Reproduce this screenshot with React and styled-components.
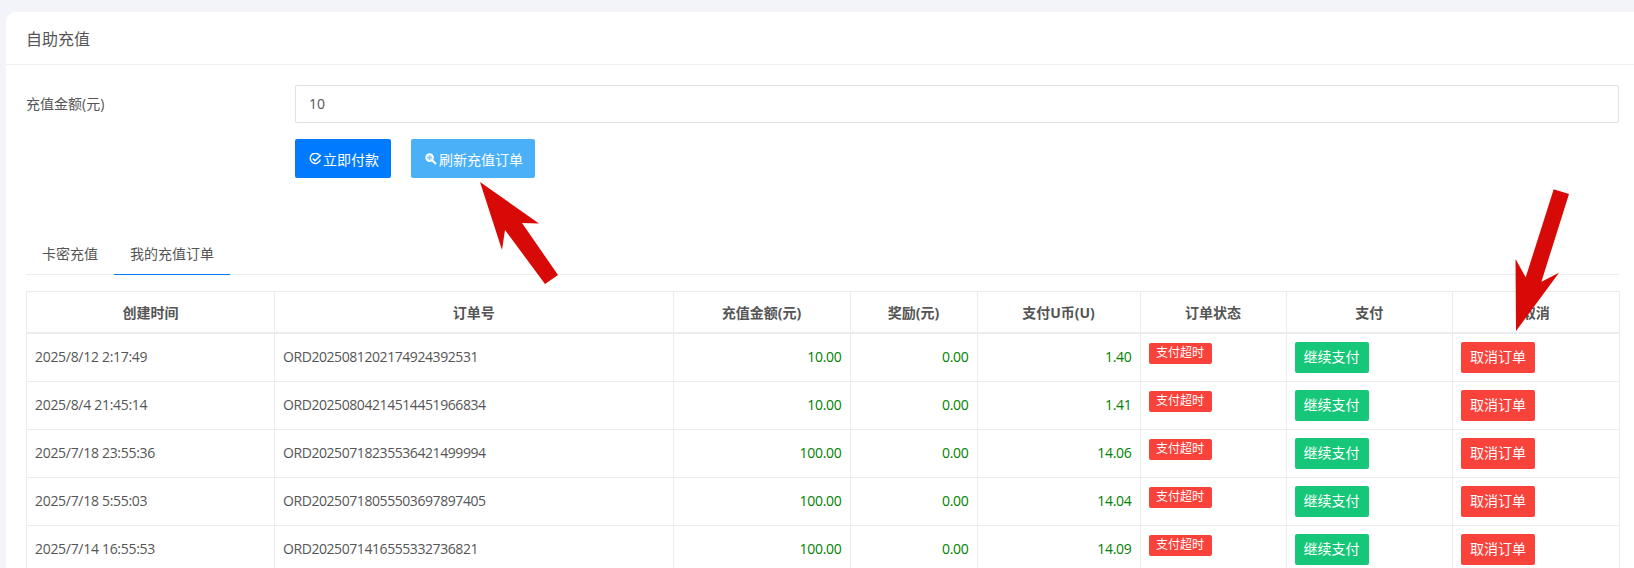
import React from "react";
import styled, { createGlobalStyle } from "styled-components";

const Global = createGlobalStyle`
  html, body { margin: 0; padding: 0; height: 568px; overflow: hidden; background: #f3f4f9; }
  body { font-family: "Open Sans", "Noto Sans CJK SC", sans-serif; font-size: 14px; color: #555; }
`;
const Page = styled.div`
  position: relative;
  width: 1634px;
  height: 568px;
  overflow: hidden;
  padding: 12px 0 0 6px;
  box-sizing: border-box;
`;
const Card = styled.section`
  background: #fff;
  border-radius: 10px 0 0 0;
  height: 600px;
`;
const CardHeader = styled.header`
  height: 53px;
  box-sizing: border-box;
  padding: 0 20px 1px;
  display: flex;
  align-items: center;
  font-size: 16px;
  border-bottom: 1px solid #eef0f3;
`;
const CardBody = styled.div`
  padding: 20px 15px 0 20px;
`;
const FormRow = styled.div`
  display: grid;
  grid-template-columns: 269px 1fr;
  align-items: center;
`;
const Label = styled.label`
  font-size: 14px;
  margin-top: -2px;
`;
const Input = styled.input`
  height: 38px;
  box-sizing: border-box;
  width: 100%;
  border: 1px solid #e2e2e2;
  border-radius: 2px;
  padding: 0 13px 2px;
  font: inherit;
  color: #555;
  outline: none;
`;
const Actions = styled.div`
  display: flex;
  gap: 20px;
  margin: 16px 0 0 269px;
`;
const ActionButton = styled.button`
  height: 39px;
  box-sizing: border-box;
  border: 0;
  border-radius: 2px;
  padding: 0 12px 0 14px;
  display: flex;
  align-items: center;
  color: #fff;
  font: inherit;
  background: ${(p) => p.$bg};
`;
const BtnIcon = styled.svg`
  width: 13px;
  height: 12px;
  margin-right: 1px;
  flex: none;
`;
const Tabs = styled.div`
  display: flex;
  margin-top: 57px;
  border-bottom: 1px solid #eceef1;
`;
const Tab = styled.div`
  height: 40px;
  box-sizing: border-box;
  padding: 0 16px 4px;
  display: flex;
  align-items: center;
  margin-bottom: -1px;
  border-bottom: 1px solid ${(p) => (p.$active ? "#007bff" : "transparent")};
`;
const Table = styled.table`
  margin-top: 16px;
  width: 1593px;
  table-layout: fixed;
  border-collapse: collapse;
  font-size: 14px;
  color: #555;
`;
const Th = styled.th`
  height: 41px;
  padding: 0 8px;
  box-sizing: border-box;
  border: 1px solid #ececec;
  border-bottom-width: 2px;
  font-weight: 700;
  text-align: center;
`;
const Td = styled.td`
  height: 48px;
  box-sizing: border-box;
  padding: 8px;
  border: 1px solid #ececec;
  text-align: ${(p) => p.$align || "left"};
  vertical-align: ${(p) => (p.$top ? "top" : "middle")};
  color: ${(p) => (p.$green ? "#008000" : "#555")};
  letter-spacing: ${(p) => p.$spacing || "0"};
  line-height: 20px;
`;
const Badge = styled.span`
  display: inline-block;
  box-sizing: border-box;
  width: 63px;
  height: 21px;
  line-height: 20px;
  text-align: center;
  font-size: 12px;
  color: #fff;
  background: #f9423a;
  border-radius: 2px;
`;
const RowButton = styled.button`
  display: block;
  width: 74px;
  height: 31px;
  padding: 0;
  border: 0;
  border-radius: 2px;
  color: #fff;
  font: inherit;
  background: ${(p) => p.$bg};
`;
const Arrows = styled.svg`
  position: absolute;
  left: 0;
  top: 0;
  width: 1634px;
  height: 568px;
  pointer-events: none;
`;

const widths = [248, 398.5, 177, 127, 163, 146, 166.5, 166.5];
const heads = ["创建时间", "订单号", "充值金额(元)", "奖励(元)", "支付U币(U)", "订单状态", "支付", "取消"];
const rows = [
  ["2025/8/12 2:17:49", "ORD2025081202174924392531", "10.00", "1.40"],
  ["2025/8/4 21:45:14", "ORD2025080421451445196683" + "4", "10.00", "1.41"],
  ["2025/7/18 23:55:36", "ORD2025071823553642149999" + "4", "100.00", "14.06"],
  ["2025/7/18 5:55:03", "ORD2025071805550369789740" + "5", "100.00", "14.04"],
  ["2025/7/14 16:55:53", "ORD2025071416555332736821", "100.00", "14.09"],
];

export default function App() {
  return (
    <Page>
      <Global />
      <Card>
        <CardHeader>自助充值</CardHeader>
        <CardBody>
          <FormRow>
            <Label>充值金额(元)</Label>
            <Input defaultValue="10" />
          </FormRow>
          <Actions>
            <ActionButton $bg="#007bff">
              <BtnIcon viewBox="0 0 13 12" fill="none" stroke="#fff" strokeWidth="1.4">
                <path d="M11 3.2A5.1 5.1 0 1 0 11.3 6.6" />
                <path d="M3.8 5.4 6 7.8 12 2" strokeWidth="1.5" />
              </BtnIcon>
              立即付款
            </ActionButton>
            <ActionButton $bg="#4ab0f8">
              <BtnIcon viewBox="0 0 13 12" fill="none" stroke="#fff">
                <circle cx="4.6" cy="4.6" r="3.5" strokeWidth="1.6" fill="#cfe9fd" />
                <path d="M2 4.6H7.2M4.6 2V7.2" strokeWidth="0.6" stroke="#4ab0f8" />
                <path d="M7.4 7.4 11 11" strokeWidth="2.1" />
              </BtnIcon>
              刷新充值订单
            </ActionButton>
          </Actions>
          <Tabs>
            <Tab>卡密充值</Tab>
            <Tab $active>我的充值订单</Tab>
          </Tabs>
          <Table>
            <colgroup>
              {widths.map((w, i) => (
                <col key={i} style={{ width: w }} />
              ))}
            </colgroup>
            <thead>
              <tr>
                {heads.map((h) => (
                  <Th key={h}>{h}</Th>
                ))}
              </tr>
            </thead>
            <tbody>
              {rows.map((r) => (
                <tr key={r[1]}>
                  <Td $spacing="-0.3px">{r[0]}</Td>
                  <Td $spacing="-0.43px">{r[1]}</Td>
                  <Td $align="right" $green $spacing="-0.3px">{r[2]}</Td>
                  <Td $align="right" $green $spacing="-0.3px">0.00</Td>
                  <Td $align="right" $green $spacing="-0.3px">{r[3]}</Td>
                  <Td $top><Badge>支付超时</Badge></Td>
                  <Td $top><RowButton $bg="#16c77a">继续支付</RowButton></Td>
                  <Td $top><RowButton $bg="#f9423a">取消订单</RowButton></Td>
                </tr>
              ))}
            </tbody>
          </Table>
        </CardBody>
      </Card>
      <Arrows viewBox="0 0 1634 568">
        <polygon fill="#d80a07" points="480,182 539,223.5 522,223 558,275 545,284 505,230 502,250" />
        <polygon fill="#d80a07" points="1553.7,189.3 1569,194 1541.4,281.7 1559,272.7 1516,331 1515.5,259 1525.7,277.3" />
      </Arrows>
    </Page>
  );
}
